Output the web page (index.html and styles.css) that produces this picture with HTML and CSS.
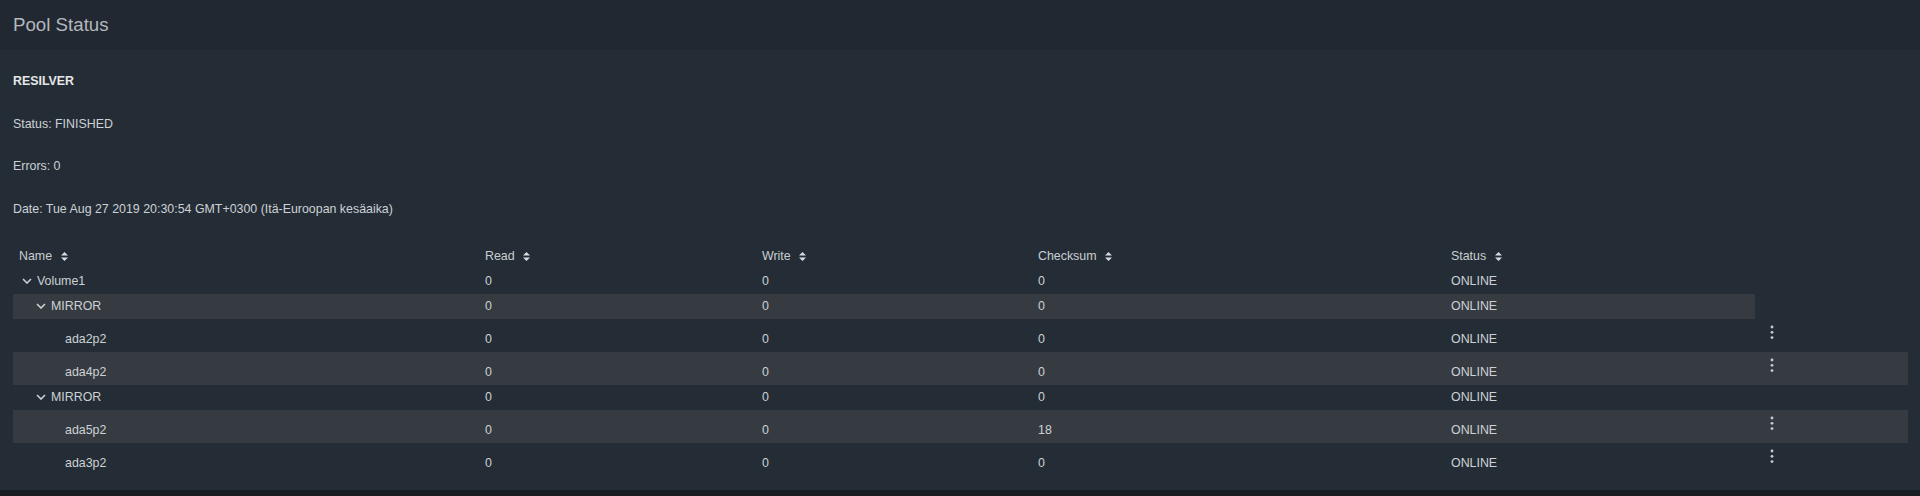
FILE: index.html
```html
<!DOCTYPE html>
<html lang="en">
<head>
    <meta charset="UTF-8">
    <meta name="viewport" content="width=device-width, initial-scale=1.0">
    <title>Pool Status</title>
    <link rel="stylesheet" href="styles.css">
</head>
<body>
    <div class="card">
        <div class="card-header">
            <h1 class="card-title">Pool Status</h1>
        </div>
        <div class="card-body">
            <div class="scan">
                <p class="scan-type">RESILVER</p>
                <p>Status: FINISHED</p>
                <p>Errors: 0</p>
                <p>Date: Tue Aug 27 2019 20:30:54 GMT+0300 (Itä-Euroopan kesäaika)</p>
            </div>

            <table class="pool-table">
                <colgroup>
                    <col class="col-name">
                    <col class="col-read">
                    <col class="col-write">
                    <col class="col-checksum">
                    <col class="col-status">
                    <col class="col-actions">
                </colgroup>
                <thead>
                    <tr>
                        <th>Name <svg class="sort" width="7" height="9" viewBox="0 0 7 9"><path d="M0 3.6 3.5 0 7 3.6Z M0 5.4 3.5 9 7 5.4Z"/></svg></th>
                        <th>Read <svg class="sort" width="7" height="9" viewBox="0 0 7 9"><path d="M0 3.6 3.5 0 7 3.6Z M0 5.4 3.5 9 7 5.4Z"/></svg></th>
                        <th>Write <svg class="sort" width="7" height="9" viewBox="0 0 7 9"><path d="M0 3.6 3.5 0 7 3.6Z M0 5.4 3.5 9 7 5.4Z"/></svg></th>
                        <th>Checksum <svg class="sort" width="7" height="9" viewBox="0 0 7 9"><path d="M0 3.6 3.5 0 7 3.6Z M0 5.4 3.5 9 7 5.4Z"/></svg></th>
                        <th>Status <svg class="sort" width="7" height="9" viewBox="0 0 7 9"><path d="M0 3.6 3.5 0 7 3.6Z M0 5.4 3.5 9 7 5.4Z"/></svg></th>
                        <th></th>
                    </tr>
                </thead>
                <tbody>
                    <tr>
                        <td><span class="toggler"><svg width="10" height="6" viewBox="0 0 10 6"><polyline points="1,1 5,5 9,1"/></svg></span>Volume1</td>
                        <td>0</td>
                        <td>0</td>
                        <td>0</td>
                        <td>ONLINE</td>
                    </tr>
                    <tr class="striped">
                        <td><span class="lvl1"><span class="toggler"><svg width="10" height="6" viewBox="0 0 10 6"><polyline points="1,1 5,5 9,1"/></svg></span>MIRROR</span></td>
                        <td>0</td>
                        <td>0</td>
                        <td>0</td>
                        <td>ONLINE</td>
                    </tr>
                    <tr class="leaf">
                        <td><span class="lvl2"><span class="toggler"></span>ada2p2</span></td>
                        <td>0</td>
                        <td>0</td>
                        <td>0</td>
                        <td>ONLINE</td>
                        <td class="actions"><svg class="kebab" width="4" height="21" viewBox="0 0 4 21"><circle cx="2" cy="5" r="1.4"/><circle cx="2" cy="10.3" r="1.4"/><circle cx="2" cy="15.6" r="1.4"/></svg></td>
                    </tr>
                    <tr class="leaf striped">
                        <td><span class="lvl2"><span class="toggler"></span>ada4p2</span></td>
                        <td>0</td>
                        <td>0</td>
                        <td>0</td>
                        <td>ONLINE</td>
                        <td class="actions"><svg class="kebab" width="4" height="21" viewBox="0 0 4 21"><circle cx="2" cy="5" r="1.4"/><circle cx="2" cy="10.3" r="1.4"/><circle cx="2" cy="15.6" r="1.4"/></svg></td>
                    </tr>
                    <tr>
                        <td><span class="lvl1"><span class="toggler"><svg width="10" height="6" viewBox="0 0 10 6"><polyline points="1,1 5,5 9,1"/></svg></span>MIRROR</span></td>
                        <td>0</td>
                        <td>0</td>
                        <td>0</td>
                        <td>ONLINE</td>
                    </tr>
                    <tr class="leaf striped">
                        <td><span class="lvl2"><span class="toggler"></span>ada5p2</span></td>
                        <td>0</td>
                        <td>0</td>
                        <td>18</td>
                        <td>ONLINE</td>
                        <td class="actions"><svg class="kebab" width="4" height="21" viewBox="0 0 4 21"><circle cx="2" cy="5" r="1.4"/><circle cx="2" cy="10.3" r="1.4"/><circle cx="2" cy="15.6" r="1.4"/></svg></td>
                    </tr>
                    <tr class="leaf">
                        <td><span class="lvl2"><span class="toggler"></span>ada3p2</span></td>
                        <td>0</td>
                        <td>0</td>
                        <td>0</td>
                        <td>ONLINE</td>
                        <td class="actions"><svg class="kebab" width="4" height="21" viewBox="0 0 4 21"><circle cx="2" cy="5" r="1.4"/><circle cx="2" cy="10.3" r="1.4"/><circle cx="2" cy="15.6" r="1.4"/></svg></td>
                    </tr>
                </tbody>
            </table>
        </div>
    </div>
</body>
</html>
```

FILE: styles.css
```css
body {
    font-family: "Liberation Sans", Arial, sans-serif;
    font-size: 12.4px;
    margin: 0;
    padding: 0;
    background: #181d24;
    color: #cdd1d5;
}
.card {
    background: #242d36;
}
.card-header {
    height: 50px;
    display: flex;
    align-items: center;
    padding: 0 13px;
    background: #212831;
}
.card-title {
    margin: 0;
    font-size: 18.7px;
    font-weight: normal;
    color: #b3b8bd;
}
.card-body {
    padding: 24px 12px 14px 13px;
}
.scan {
    margin-bottom: 28px;
}
.scan p {
    margin: 0 0 28.5px;
    line-height: 14px;
}
.scan p:last-child {
    margin-bottom: 0;
}
.scan .scan-type {
    font-weight: bold;
    color: #e6e7e8;
}
.pool-table {
    width: 1895px;
    table-layout: fixed;
    border-collapse: collapse;
    border-spacing: 0;
}
.col-name { width: 466px; }
.col-read { width: 277px; }
.col-write { width: 276px; }
.col-checksum { width: 413px; }
.col-status { width: 310px; }
.col-actions { width: 153px; }
.pool-table th,
.pool-table td {
    padding: 0 6px;
    height: 25px;
    line-height: 25px;
    text-align: left;
    font-weight: normal;
    white-space: nowrap;
}
.pool-table th {
    color: #c9cdd1;
}
.sort {
    margin-left: 5px;
    vertical-align: -1px;
    fill: #d9dcdf;
}
.striped td {
    background: #363b42;
}
.pool-table .leaf td {
    height: 33px;
    padding-top: 8px;
    padding-bottom: 0;
    vertical-align: top;
    box-sizing: border-box;
}
.pool-table .leaf td.actions {
    padding: 3.5px 0 0 15px;
}
.kebab {
    display: block;
    fill: #c8ccd0;
}
.toggler {
    display: inline-block;
    width: 18px;
}
.toggler svg {
    margin-left: 3px;
    vertical-align: 1px;
    fill: none;
    stroke: #cdd1d5;
    stroke-width: 1.6;
}
.lvl1 {
    padding-left: 14px;
}
.lvl2 {
    padding-left: 28px;
}
```
